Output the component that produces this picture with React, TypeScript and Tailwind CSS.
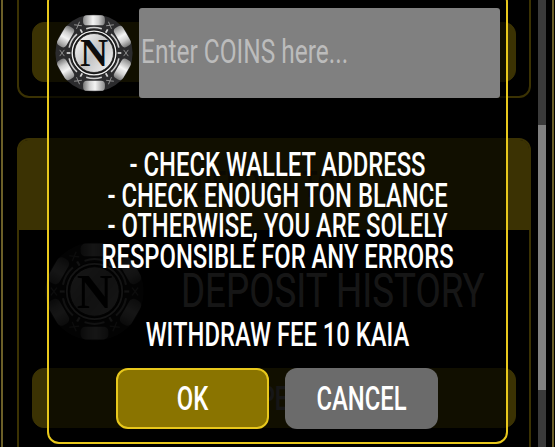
import React, { useId } from "react";

const Chip: React.FC<{ className?: string }> = ({ className }) => {
  const id = useId();
  return (
    <svg viewBox="0 0 100 100" className={className}>
      <defs>
        <linearGradient id={`${id}-a`} x1="0" x2="1" y1="0" y2="0">
          <stop offset="0" stopColor="#8a8a8a" />
          <stop offset="0.45" stopColor="#f4f4f4" />
          <stop offset="0.7" stopColor="#d0d0d0" />
          <stop offset="1" stopColor="#777" />
        </linearGradient>
        <linearGradient id={`${id}-b`} x1="0" x2="1" y1="0.1" y2="0.9">
          <stop offset="0" stopColor="#fafafa" />
          <stop offset="0.5" stopColor="#c4c4c4" />
          <stop offset="1" stopColor="#f4f4f4" />
        </linearGradient>
      </defs>
      <circle cx="50" cy="50" r="49.5" fill="#2b2b2d" />
      {[0, 60, 120, 180, 240, 300].map((a) => (
        <g key={a} transform={`rotate(${a} 50 50)`}>
          <rect x="36" y="1.5" width="28" height="13" rx="5" fill={`url(#${id}-a)`} />
          <path d="M40 19 Q50 15.5 60 19" fill="none" stroke="#d0d0d0" strokeWidth="2" />
        </g>
      ))}
      {[30, 90, 150, 210, 270, 330].map((a) => (
        <g key={a} transform={`rotate(${a} 50 50)`} stroke="#8f8f8f" strokeWidth="1.2">
          <path d="M46 6 L54 12 M54 6 L46 12" />
          <path d="M50 15 L50 20" stroke="#d8d8d8" strokeWidth="2.2" />
        </g>
      ))}
      <circle cx="50" cy="50" r="30" fill="#161616" />
      <circle cx="50" cy="50" r="28" fill="none" stroke="#f0f0f0" strokeWidth="1.8" />
      <circle cx="50" cy="50" r="25" fill={`url(#${id}-b)`} stroke="#222" strokeWidth="1" />
      <text
        x="50"
        y="67"
        textAnchor="middle"
        fontFamily="'Liberation Serif', serif"
        fontWeight="700"
        fontSize="50"
        fill="#0d0d0d"
      >
        N
      </text>
    </svg>
  );
};

const Line: React.FC<{ children: React.ReactNode; className?: string }> = ({ children, className }) => (
  <div className={`flex scale-x-[0.7] justify-center whitespace-nowrap ${className ?? ""}`}>{children}</div>
);

export default function App() {
  return (
    <div className="h-[447px] w-[555px] overflow-hidden bg-black pl-[1px] font-['Roboto','Liberation_Sans',sans-serif] font-medium">
      <div className="relative flex h-[447px] w-[553px] border-x-2 border-[#6b5f28]">
        {/* page behind the dialog */}
        <div className="w-[535px] shrink-0 pl-[14px] pr-[7px]">
          <section className="-mt-[32px] flex h-[130px] flex-col justify-end rounded-b-xl border-2 border-[#c5a80d] px-[13px] pb-[14px]">
            <div className="h-[60px] rounded-xl border border-[#c5a80d] bg-[#c5a80d]" />
          </section>

          <section className="mt-[40px] h-[330px] rounded-xl border-2 border-[#c5a80d]">
            <div className="flex h-[90px] items-center justify-center rounded-t-[9px] bg-[#c5a80d] text-[36px] text-[#7a6a10]">
              <Line>DEPOSIT TON</Line>
            </div>
            <div className="flex h-[120px] items-center pl-[26px] pt-[2px]">
              <Chip className="h-[99px] w-[99px] shrink-0" />
              <div className="ml-[37px] w-[360px] origin-left scale-x-[0.75] whitespace-nowrap text-[49px] font-normal text-white">
                DEPOSIT HISTORY
              </div>
            </div>
            <div className="mx-[13px] mt-[18px] flex h-[60px] items-center justify-center rounded-xl border border-[#c5a80d] bg-[#c5a80d] text-[34px] text-white">
              <Line>OPEN</Line>
            </div>
          </section>
        </div>
        <div className="relative z-20 h-[447px] w-[8px] shrink-0 bg-[#3a3a3a]">
          <div className="mt-[125px] h-[265px] bg-[#808080]" />
        </div>

        {/* dialog */}
        <div className="absolute inset-0 z-10 bg-black/70">
          <div className="absolute left-[44px] top-[-10px] flex h-[454px] w-[461px] flex-col rounded-xl border-2 border-[#e8c81c] bg-black/70 text-white">
            <div className="mt-[16px] flex items-center pl-[6px]">
              <Chip className="h-[78px] w-[78px] shrink-0" />
              <div className="ml-[6px] flex h-[90px] w-[361px] items-center overflow-hidden rounded-[3px] bg-[#808080] pb-[3px] pl-[2px] text-[34px] font-normal text-[#bcbcbc]">
                <span className="origin-left scale-x-[0.72] whitespace-nowrap">Enter COINS here...</span>
              </div>
            </div>

            <div className="mt-[51px] text-[34px] leading-[30.7px]">
              <Line>- CHECK WALLET ADDRESS</Line>
              <Line>- CHECK ENOUGH TON BLANCE</Line>
              <Line>- OTHERWISE, YOU ARE SOLELY</Line>
              <Line>RESPONSIBLE FOR ANY ERRORS</Line>
            </div>

            <div className="mt-[47px] text-[34px] leading-[30.7px]">
              <Line>WITHDRAW FEE 10 KAIA</Line>
            </div>

            <div className="mt-[18px] flex justify-center gap-[16px] pr-[1px]">
              <button className="h-[61px] w-[153px] rounded-xl border-2 border-[#e8c81c] bg-[#8a7400] text-[34px] text-white">
                <Line>OK</Line>
              </button>
              <button className="h-[61px] w-[153px] rounded-xl bg-[#6b6b6b] text-[34px] text-white">
                <Line>CANCEL</Line>
              </button>
            </div>
          </div>
        </div>
      </div>
    </div>
  );
}
